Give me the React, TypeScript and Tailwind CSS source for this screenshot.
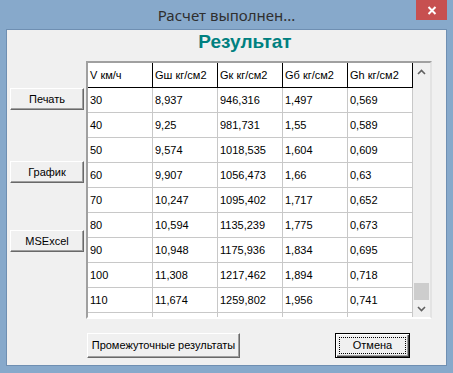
import React from 'react'

const rows: string[][] = [
  ['30', '8,937', '946,316', '1,497', '0,569'],
  ['40', '9,25', '981,731', '1,55', '0,589'],
  ['50', '9,574', '1018,535', '1,604', '0,609'],
  ['60', '9,907', '1056,473', '1,66', '0,63'],
  ['70', '10,247', '1095,402', '1,717', '0,652'],
  ['80', '10,594', '1135,239', '1,775', '0,673'],
  ['90', '10,948', '1175,936', '1,834', '0,695'],
  ['100', '11,308', '1217,462', '1,894', '0,718'],
  ['110', '11,674', '1259,802', '1,956', '0,741'],
  ['', '', '', '', ''],
]

const headers = ['V км/ч', 'Gш кг/см2', 'Gк кг/см2', 'Gб кг/см2', 'Gh кг/см2']

const Button: React.FC<{ label: string; className?: string; isDefault?: boolean }> = ({
  label,
  className = '',
  isDefault,
}) => (
  <div
    className={
      'relative flex items-center justify-center bg-[#f0f0f0] text-[11px] text-black ' +
      (isDefault
        ? 'border border-black shadow-[inset_1px_1px_0_#ffffff,inset_-1px_-1px_0_#404040,inset_-2px_-2px_0_#a0a0a0] '
        : 'border border-t-white border-l-white border-r-[#696969] border-b-[#696969] shadow-[inset_-1px_-1px_0_#a0a0a0] ') +
      className
    }
  >
    {label}
    {isDefault && <span className="absolute inset-[3px] border border-dotted border-black" />}
  </div>
)

const Chevron: React.FC<{ up?: boolean }> = ({ up }) => (
  <svg width="9" height="6" viewBox="0 0 9 6">
    <path
      d={up ? 'M1 5L4.5 1.5L8 5' : 'M1 1L4.5 4.5L8 1'}
      fill="none"
      stroke="#606060"
      strokeWidth="1.6"
    />
  </svg>
)

const ResultGrid: React.FC = () => (
  <div className="flex w-[346px] h-[258px] border-2 border-t-[#a0a0a0] border-l-[#a0a0a0] border-r-[#e3e3e3] border-b-[#ffffff] bg-white">
    <div className="w-[325px] h-[254px] overflow-hidden">
      <div className="flex h-[25px]">
        {headers.map((h) => (
          <div
            key={h}
            className="w-[65px] h-[25px] shrink-0 border-r border-b border-r-[#000000] border-b-[#000000] pl-[2px] flex items-center text-[11px] text-black"
          >
            {h}
          </div>
        ))}
      </div>
      {rows.map((r, i) => (
        <div key={i} className="flex h-[25px]">
          {r.map((c, j) => (
            <div
              key={j}
              className={
                'w-[65px] h-[25px] shrink-0 border-b border-[#c8c8c8] pl-[2px] flex items-center text-[11px] text-black ' +
                (j === 0 ? 'border-r border-r-[#c8c8c8]' : 'border-r border-r-[#c8c8c8]')
              }
            >
              {c}
            </div>
          ))}
        </div>
      ))}
    </div>
    <div className="w-[17px] h-[254px] flex flex-col bg-[#f0f0f0]">
      <div className="h-[17px] flex items-center justify-center">
        <Chevron up />
      </div>
      <div className="flex-1 flex flex-col justify-end">
        <div className="h-[17px] mx-[1px] bg-[#cdcdcd]" />
      </div>
      <div className="h-[17px] flex items-center justify-center">
        <Chevron />
      </div>
    </div>
  </div>
)

export default function App() {
  return (
    <div
      className="w-[453px] h-[373px] bg-[#87a9cb] flex flex-col overflow-hidden"
      style={{ fontFamily: '"Liberation Sans", Arial, sans-serif' }}
    >
      <div className="relative h-[29px] flex items-center justify-center">
        <span className="text-[15px] text-[#2f2f2f] pt-[1px]" style={{ fontFamily: '"Noto Sans", sans-serif' }}>
          Расчет выполнен...
        </span>
        <div className="absolute right-[6px] top-0 w-[31px] h-[20px] bg-[#c75050] flex items-center justify-center">
          <svg width="10" height="9" viewBox="0 0 10 9">
            <path d="M1.5 1L8.5 8M8.5 1L1.5 8" stroke="#ffffff" strokeWidth="2" />
          </svg>
        </div>
      </div>
      <div className="mx-[6px] border border-[#6f8fb2] bg-[#f0f0f0] h-[337px] flex flex-col">
        <div className="pl-[37px] pt-[1px] h-[23px] text-center text-[19px] leading-[22px] font-bold text-[#008080]">
          Результат
        </div>
        <div className="flex mt-[8px]">
          <div className="w-[79px] pl-[3px] flex flex-col">
            <Button label="Печать" className="w-[74px] h-[22px] mt-[27px]" />
            <Button label="График" className="w-[74px] h-[22px] mt-[51px]" />
            <Button label="MSExcel" className="w-[74px] h-[22px] mt-[47px]" />
          </div>
          <ResultGrid />
        </div>
        <div className="flex mt-[14px] pl-[80px]">
          <Button label="Промежуточные результаты" className="w-[153px] h-[25px]" />
          <Button label="Отмена" isDefault className="w-[75px] h-[25px] ml-[95px]" />
        </div>
      </div>
    </div>
  )
}
